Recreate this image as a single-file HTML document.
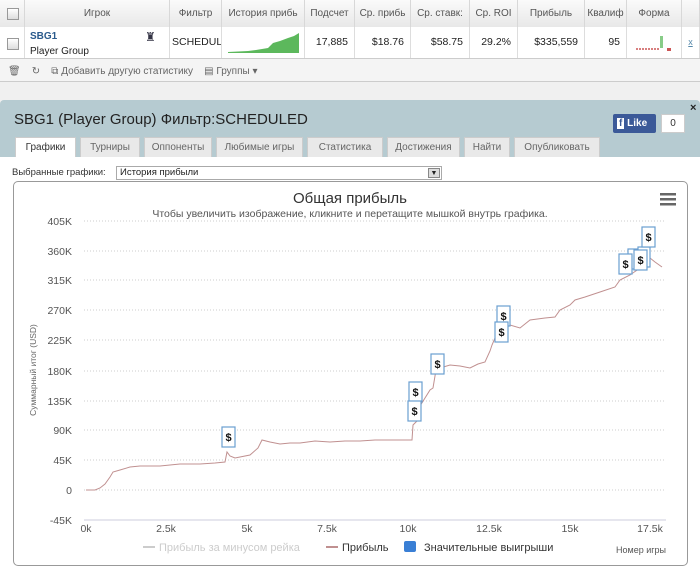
<!DOCTYPE html>
<html><head><meta charset="utf-8"><style>
*{margin:0;padding:0;box-sizing:border-box}
body{width:700px;height:579px;background:#f0f0f0;font-family:"Liberation Sans","DejaVu Sans",sans-serif;position:relative;overflow:hidden}
.abs{position:absolute}
.th{position:absolute;top:0;height:27px;line-height:27px;font-size:10px;color:#555;text-align:center;border-right:1px solid #d8d8d8;overflow:hidden;white-space:nowrap;background:linear-gradient(#fafafa,#e8e8e8)}
.td{position:absolute;top:27px;height:31px;line-height:31px;font-size:10.5px;color:#222;text-align:right;padding-right:6px;border-right:1px solid #ddd;background:#fff;overflow:hidden;white-space:nowrap}
.cb{position:absolute;width:12px;height:12px;border:1px solid #999;background:linear-gradient(#fff,#ddd)}
.tab{position:absolute;top:137px;height:20px;line-height:20px;font-size:10px;color:#666;background:#e9e9e9;border:1px solid #ccc;border-bottom:none;text-align:center}
</style></head><body>
<!-- table -->
<div class="abs" style="left:0;top:0;width:700px;height:82px;background:#f4f4f4;border-bottom:1px solid #ccc"></div>
<div class="th" style="left:0;width:25px"></div><div class="cb" style="left:7px;top:8px"></div>
<div class="th" style="left:25px;width:145px">Игрок</div>
<div class="th" style="left:170px;width:52px">Фильтр</div>
<div class="th" style="left:222px;width:83px">История прибь</div>
<div class="th" style="left:305px;width:50px">Подсчет</div>
<div class="th" style="left:355px;width:56px">Ср. прибь</div>
<div class="th" style="left:411px;width:59px">Ср. ставк:</div>
<div class="th" style="left:470px;width:48px">Ср. ROI</div>
<div class="th" style="left:518px;width:67px">Прибыль</div>
<div class="th" style="left:585px;width:42px">Квалиф</div>
<div class="th" style="left:627px;width:55px">Форма</div>
<div class="th" style="left:682px;width:18px"></div>
<div class="td" style="left:0;width:25px"></div><div class="cb" style="left:7px;top:38px"></div>
<div class="td" style="left:25px;width:145px;text-align:left;padding-left:5px;line-height:14px;padding-top:2px"><b style="color:#2a5a8c;font-size:10px">SBG1</b><br><span style="font-size:10px">Player Group</span><span class="abs" style="left:120px;top:3px;font-size:12px;color:#334">♜</span></div>
<div class="td" style="left:170px;width:52px;text-align:left;padding-left:2px">SCHEDUL</div>
<div class="td" style="left:222px;width:83px"><svg class="abs" style="left:6px;top:4px" width="72" height="22"><path d="M0 21 L20 20 L28 19 L40 17 L45 12 L52 10 L60 7 L66 5 L71 2 L71 22 L0 22Z" fill="#5cb85c"/></svg></div>
<div class="td" style="left:305px;width:50px">17,885</div>
<div class="td" style="left:355px;width:56px">$18.76</div>
<div class="td" style="left:411px;width:59px">$58.75</div>
<div class="td" style="left:470px;width:48px">29.2%</div>
<div class="td" style="left:518px;width:67px">$335,559</div>
<div class="td" style="left:585px;width:42px">95</div>
<div class="td" style="left:627px;width:55px"><svg class="abs" style="left:9px;top:5px" width="40" height="20"><path d="M0 17h24" stroke="#c55" stroke-dasharray="2 1" stroke-width="1.5"/><rect x="24" y="4" width="3" height="12" fill="#8c8"/><rect x="31" y="16" width="4" height="3" fill="#c55"/></svg></div>
<div class="td" style="left:682px;width:18px;text-align:center;padding:0;color:#58a;text-decoration:underline;font-size:9px">x</div>
<div class="abs" style="left:0;top:58px;width:700px;height:1px;background:#ccc"></div>
<div class="abs" style="left:8px;top:66px;font-size:10px;color:#666;white-space:nowrap">🗑&nbsp;&nbsp;&nbsp;&nbsp;↻&nbsp;&nbsp;&nbsp;&nbsp;⧉ Добавить другую статистику&nbsp;&nbsp;&nbsp;&nbsp;▤ Группы ▾</div>
<!-- panel -->
<div class="abs" style="left:0;top:100px;width:700px;height:57px;background:#b6cbd1;border-top-left-radius:4px;border-top-right-radius:4px"></div>
<div class="abs" style="left:14px;top:111px;font-size:15px;color:#222;white-space:nowrap">SBG1 (Player Group) Фильтр:SCHEDULED</div>
<div class="abs" style="left:690px;top:102px;font-size:11px;font-weight:bold;color:#222">×</div>
<div class="abs" style="left:613px;top:114px;width:43px;height:19px;background:#3b5998;border-radius:2px;color:#fff;font-size:10px;font-weight:bold;line-height:19px;padding-left:4px"><span style="background:#fff;color:#3b5998;padding:0 2px">f</span> Like</div>
<div class="abs" style="left:661px;top:114px;width:24px;height:19px;background:#fff;border:1px solid #ccc;font-size:10px;text-align:center;line-height:17px;color:#333">0</div>
<div class="abs" style="left:0;top:157px;width:700px;height:422px;background:#fff"></div>
<div class="tab" style="left:15px;width:61px;background:#fff;color:#333">Графики</div>
<div class="tab" style="left:80px;width:60px">Турниры</div>
<div class="tab" style="left:144px;width:68px">Оппоненты</div>
<div class="tab" style="left:216px;width:87px">Любимые игры</div>
<div class="tab" style="left:307px;width:76px">Статистика</div>
<div class="tab" style="left:387px;width:73px">Достижения</div>
<div class="tab" style="left:464px;width:46px">Найти</div>
<div class="tab" style="left:514px;width:86px">Опубликовать</div>
<div class="abs" style="left:12px;top:167px;font-size:9.5px;color:#333">Выбранные графики:</div>
<div class="abs" style="left:116px;top:166px;width:326px;height:14px;border:1px solid #aaa;font-size:9.5px;padding-left:3px;line-height:12px;color:#222">История прибыли<span class="abs" style="right:1px;top:1px;width:12px;height:10px;background:#ddd;border:1px solid #888;font-size:7px;text-align:center;line-height:9px">▼</span></div>
<div class="abs" style="left:13px;top:181px;width:675px;height:385px;border:1px solid #999;border-radius:5px;background:#fff"></div>
<svg class="abs" style="left:0;top:0" width="700" height="579" font-family="Liberation Sans, DejaVu Sans, sans-serif">
<text x="350" y="203" text-anchor="middle" font-size="15" fill="#333">Общая прибыль</text>
<text x="350" y="217" text-anchor="middle" font-size="10.5" fill="#555">Чтобы увеличить изображение, кликните и перетащите мышкой внутрь графика.</text>
<g fill="#666"><rect x="660" y="193" width="16" height="2.5"/><rect x="660" y="198" width="16" height="2.5"/><rect x="660" y="203" width="16" height="2.5"/></g>
<g stroke="#ccc" stroke-dasharray="1 2"><path d="M84 221H666M84 251H666M84 280H666M84 310H666M84 340H666M84 371H666M84 401H666M84 430H666M84 460H666M84 490H666"/></g>
<path d="M84 520H666" stroke="#ccd"/>
<g font-size="10.5" fill="#555" text-anchor="end"><text x="72" y="225">405K</text><text x="72" y="255">360K</text><text x="72" y="284">315K</text><text x="72" y="314">270K</text><text x="72" y="344">225K</text><text x="72" y="375">180K</text><text x="72" y="405">135K</text><text x="72" y="434">90K</text><text x="72" y="464">45K</text><text x="72" y="494">0</text><text x="72" y="524">-45K</text></g>
<g font-size="10.5" fill="#555" text-anchor="middle"><text x="86" y="532">0k</text><text x="166" y="532">2.5k</text><text x="247" y="532">5k</text><text x="327" y="532">7.5k</text><text x="408" y="532">10k</text><text x="489" y="532">12.5k</text><text x="570" y="532">15k</text><text x="650" y="532">17.5k</text></g>
<text transform="translate(36,370) rotate(-90)" text-anchor="middle" font-size="8.5" fill="#666">Суммарный итог (USD)</text>
<path d="M86 490L95 490L100 488L105 484L110 477L113 472L120 470L130 467L140 466L160 466L180 464L200 464L215 463L225 462L227 452L230 456L235 458L240 457L250 455L258 448L262 440L270 442L280 444L290 443L300 443L315 441L330 442L345 441L360 441L375 440L390 440L405 440L412 440L413 425L418 420L420 406L425 398L430 390L433 388L436 370L440 368L450 365L460 366L470 368L478 364L485 362L490 351L492 345L495 338L500 330L510 325L520 328L530 320L545 318L555 317L560 310L570 305L575 300L585 297L600 292L615 287L620 280L630 275L640 268L645 262L650 258L655 262L662 267" fill="none" stroke="#c09090" stroke-width="1"/>
<g fill="#fff" stroke="#6a9fd0" stroke-width="1.2">
<rect x="628" y="249" width="12" height="20"/><rect x="638" y="247" width="12" height="20"/>
<rect x="222" y="427" width="13" height="20"/><rect x="409" y="382" width="13" height="20"/><rect x="408" y="401" width="13" height="20"/><rect x="431" y="354" width="13" height="20"/><rect x="497" y="306" width="13" height="20"/><rect x="495" y="322" width="13" height="20"/><rect x="619" y="254" width="13" height="20"/><rect x="634" y="250" width="13" height="20"/><rect x="642" y="227" width="13" height="20"/>
</g>
<g font-size="11" font-weight="bold" fill="#111" text-anchor="middle"><text x="228.5" y="441">$</text><text x="415.5" y="396">$</text><text x="414.5" y="415">$</text><text x="437.5" y="368">$</text><text x="503.5" y="320">$</text><text x="501.5" y="336">$</text><text x="625.5" y="268">$</text><text x="640.5" y="264">$</text><text x="648.5" y="241">$</text></g>
<path d="M143 547h12" stroke="#ccc" stroke-width="2"/><text x="159" y="551" font-size="11" fill="#ccc">Прибыль за минусом рейка</text>
<path d="M326 547h12" stroke="#c09090" stroke-width="2"/><text x="342" y="551" font-size="11" fill="#333">Прибыль</text>
<rect x="404" y="541" width="12" height="11" rx="2" fill="#3a7fd5"/><text x="424" y="551" font-size="11" fill="#333">Значительные выигрыши</text>
<text x="666" y="553" text-anchor="end" font-size="9" fill="#555">Номер игры</text>
</svg>
</body></html>
